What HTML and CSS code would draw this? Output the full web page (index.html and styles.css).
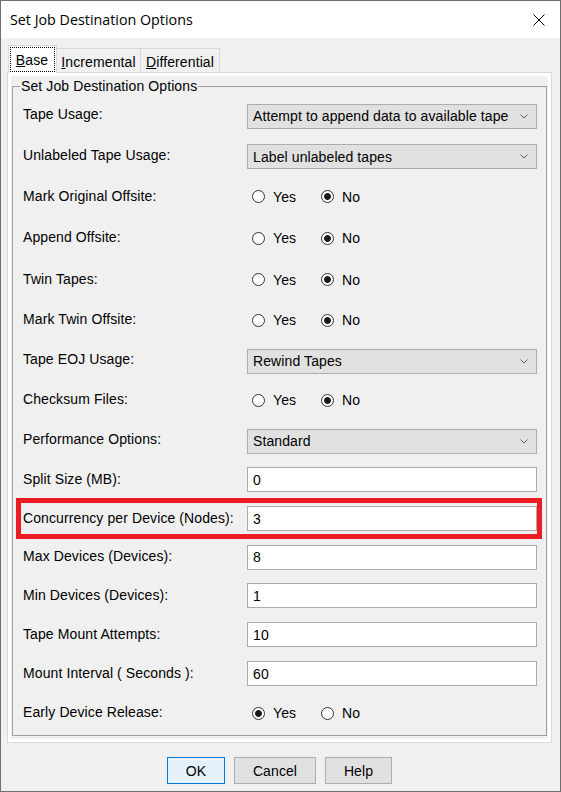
FILE: index.html
```html
<!DOCTYPE html>
<html>
<head>
<meta charset="utf-8">
<title>Set Job Destination Options</title>
<link rel="stylesheet" href="styles.css">
</head>
<body>
<div class="window">
  <div class="titlebar">
    <span class="title">Set Job Destination Options</span>
    <span class="close">
      <svg width="12" height="12" viewBox="0 0 12 12"><path d="M0.5 0.5 L11.5 11.5 M11.5 0.5 L0.5 11.5" stroke="#000" stroke-width="1" fill="none"/></svg>
    </span>
  </div>
  <div class="content">
    <div class="tabs">
      <div class="tab active tab-base"><span class="focus"><u>B</u>ase</span></div>
      <div class="tab tab-inc"><span><u>I</u>ncremental</span></div>
      <div class="tab tab-diff"><span><u>D</u>ifferential</span></div>
    </div>
    <div class="panel">
      <div class="page">
        <fieldset class="group">
          <legend>Set Job Destination Options</legend>
          <div class="rows">
            <div class="row">
              <span class="label">Tape Usage:</span>
              <div class="combo"><span>Attempt to append data to available tape</span><svg class="chev" width="8" height="5" viewBox="0 0 8 5"><polyline points="0.5,0.5 4,4 7.5,0.5" stroke="#606060" fill="none"/></svg></div>
            </div>
            <div class="row">
              <span class="label">Unlabeled Tape Usage:</span>
              <div class="combo"><span>Label unlabeled tapes</span><svg class="chev" width="8" height="5" viewBox="0 0 8 5"><polyline points="0.5,0.5 4,4 7.5,0.5" stroke="#606060" fill="none"/></svg></div>
            </div>
            <div class="row">
              <span class="label">Mark Original Offsite:</span>
              <div class="radios"><span class="opt"><span class="radio"></span>Yes</span><span class="opt"><span class="radio on"></span>No</span></div>
            </div>
            <div class="row">
              <span class="label">Append Offsite:</span>
              <div class="radios"><span class="opt"><span class="radio"></span>Yes</span><span class="opt"><span class="radio on"></span>No</span></div>
            </div>
            <div class="row">
              <span class="label">Twin Tapes:</span>
              <div class="radios"><span class="opt"><span class="radio"></span>Yes</span><span class="opt"><span class="radio on"></span>No</span></div>
            </div>
            <div class="row">
              <span class="label">Mark Twin Offsite:</span>
              <div class="radios"><span class="opt"><span class="radio"></span>Yes</span><span class="opt"><span class="radio on"></span>No</span></div>
            </div>
            <div class="row">
              <span class="label">Tape EOJ Usage:</span>
              <div class="combo"><span>Rewind Tapes</span><svg class="chev" width="8" height="5" viewBox="0 0 8 5"><polyline points="0.5,0.5 4,4 7.5,0.5" stroke="#606060" fill="none"/></svg></div>
            </div>
            <div class="row">
              <span class="label">Checksum Files:</span>
              <div class="radios"><span class="opt"><span class="radio"></span>Yes</span><span class="opt"><span class="radio on"></span>No</span></div>
            </div>
            <div class="row">
              <span class="label">Performance Options:</span>
              <div class="combo"><span>Standard</span><svg class="chev" width="8" height="5" viewBox="0 0 8 5"><polyline points="0.5,0.5 4,4 7.5,0.5" stroke="#606060" fill="none"/></svg></div>
            </div>
            <div class="row">
              <span class="label">Split Size (MB):</span>
              <div class="input">0</div>
            </div>
            <div class="row hl">
              <span class="label">Concurrency per Device (Nodes):</span>
              <div class="input">3</div>
            </div>
            <div class="row">
              <span class="label">Max Devices (Devices):</span>
              <div class="input">8</div>
            </div>
            <div class="row">
              <span class="label">Min Devices (Devices):</span>
              <div class="input">1</div>
            </div>
            <div class="row">
              <span class="label">Tape Mount Attempts:</span>
              <div class="input">10</div>
            </div>
            <div class="row">
              <span class="label">Mount Interval ( Seconds ):</span>
              <div class="input">60</div>
            </div>
            <div class="row">
              <span class="label">Early Device Release:</span>
              <div class="radios"><span class="opt"><span class="radio on"></span>Yes</span><span class="opt"><span class="radio"></span>No</span></div>
            </div>
          </div>
        </fieldset>
      </div>
    </div>
    <div class="buttons">
      <div class="btn ok">OK</div>
      <div class="btn cancel">Cancel</div>
      <div class="btn help">Help</div>
    </div>
  </div>
</div>
</body>
</html>
```
FILE: styles.css
```css
* { box-sizing: border-box; }
html, body { margin: 0; padding: 0; }
body {
  width: 561px;
  height: 792px;
  font-family: "Liberation Sans", Arial, sans-serif;
  font-size: 14px;
  letter-spacing: 0.1px;
  color: #000;
  background: #f0f0f0;
}
.window {
  width: 561px;
  height: 792px;
  border: 1px solid #6f6f6f;
  background: #f0f0f0;
  display: flex;
  flex-direction: column;
}
.titlebar {
  height: 37px;
  flex: none;
  background: #fff;
  display: flex;
  align-items: center;
  justify-content: space-between;
  padding-left: 9px;
}
.title {
  font-family: "Open Sans", "Noto Sans", sans-serif;
  font-size: 14.3px;
  letter-spacing: 0;
  padding-bottom: 1px;
}
.close {
  width: 42px;
  height: 37px;
  display: flex;
  align-items: center;
  justify-content: center;
}
.content {
  padding: 7px 8px 0 6px;
  display: flex;
  flex-direction: column;
}
.tabs {
  display: flex;
  align-items: flex-end;
  padding-left: 1px;
  height: 27px;
}
.tab {
  height: 24px;
  border: 1px solid #d9d9d9;
  border-bottom: 0;
  background: #f0f0f0;
  display: flex;
  align-items: center;
  justify-content: center;
  padding-top: 2px;
}
.tab + .tab { margin-left: -1px; }
.tab.active {
  height: 28px;
  margin-bottom: -1px;
  background: #fff;
  position: relative;
  z-index: 1;
  padding-top: 0;
}
.tab-base { width: 49px; }
.tab-inc { width: 85px; }
.tab-diff { width: 80px; }
.focus {
  width: 43px;
  height: 23px;
  outline: 1px dotted #000;
  display: flex;
  align-items: center;
  justify-content: center;
  padding-right: 1px;
}
.panel {
  height: 671px;
  border: 1px solid #d9d9d9;
  background: #fff;
  padding: 3px;
}
.page {
  height: 100%;
  background: #f0f0f0;
  padding: 2px 1px 3px 1px;
}
.group {
  margin: 0;
  border: 1px solid #a0a0a0;
  padding: 1px 9px 2px 10px;
  min-width: 0;
}
.group legend {
  padding: 0 1px;
  margin-left: -3px;
  line-height: 16px;
  font-size: 14px;
}
.rows {
  display: grid;
  grid-template-rows: 40px 41px 41px 42px 41px 40px 40px 40px 40px 39px 39px 38px 39px 39px 39px 40px;
}
.row {
  display: flex;
  align-items: center;
}
.label {
  width: 224px;
  flex: none;
  padding-bottom: 2px;
}
.combo {
  flex: 1;
  height: 25px;
  margin-top: 2px;
  border: 1px solid #adadad;
  background: #e1e1e1;
  display: flex;
  align-items: center;
  justify-content: space-between;
  padding: 0 8px 0 5px;
}
.chev { display: block; }
.input {
  flex: 1;
  height: 25px;
  border: 1px solid #ababab;
  background: #fff;
  padding-left: 5px;
  display: flex;
  align-items: center;
}
.radios {
  display: flex;
  padding-left: 5px;
}
.opt {
  display: flex;
  align-items: center;
  width: 69px;
}
.radio {
  width: 13px;
  height: 13px;
  border: 1px solid #333;
  border-radius: 50%;
  background: #fff;
  margin-right: 8px;
  flex: none;
}
.radio.on {
  background: radial-gradient(circle at center, #1a1a1a 0, #1a1a1a 3px, #fff 3.8px);
}
.row.hl { position: relative; }
.row.hl::after {
  content: "";
  position: absolute;
  left: -7px;
  right: -5px;
  top: -1px;
  bottom: -1px;
  border: 5px solid #ed1c24;
  pointer-events: none;
}
.buttons {
  display: flex;
  justify-content: center;
  gap: 9px;
  margin-top: 14px;
}
.btn {
  height: 27px;
  border: 1px solid #adadad;
  background: #e1e1e1;
  display: flex;
  align-items: center;
  justify-content: center;
}
.ok { width: 58px; border-color: #0078d7; background: #e5f1fb; }
.cancel { width: 82px; }
.help { width: 67px; }
```
